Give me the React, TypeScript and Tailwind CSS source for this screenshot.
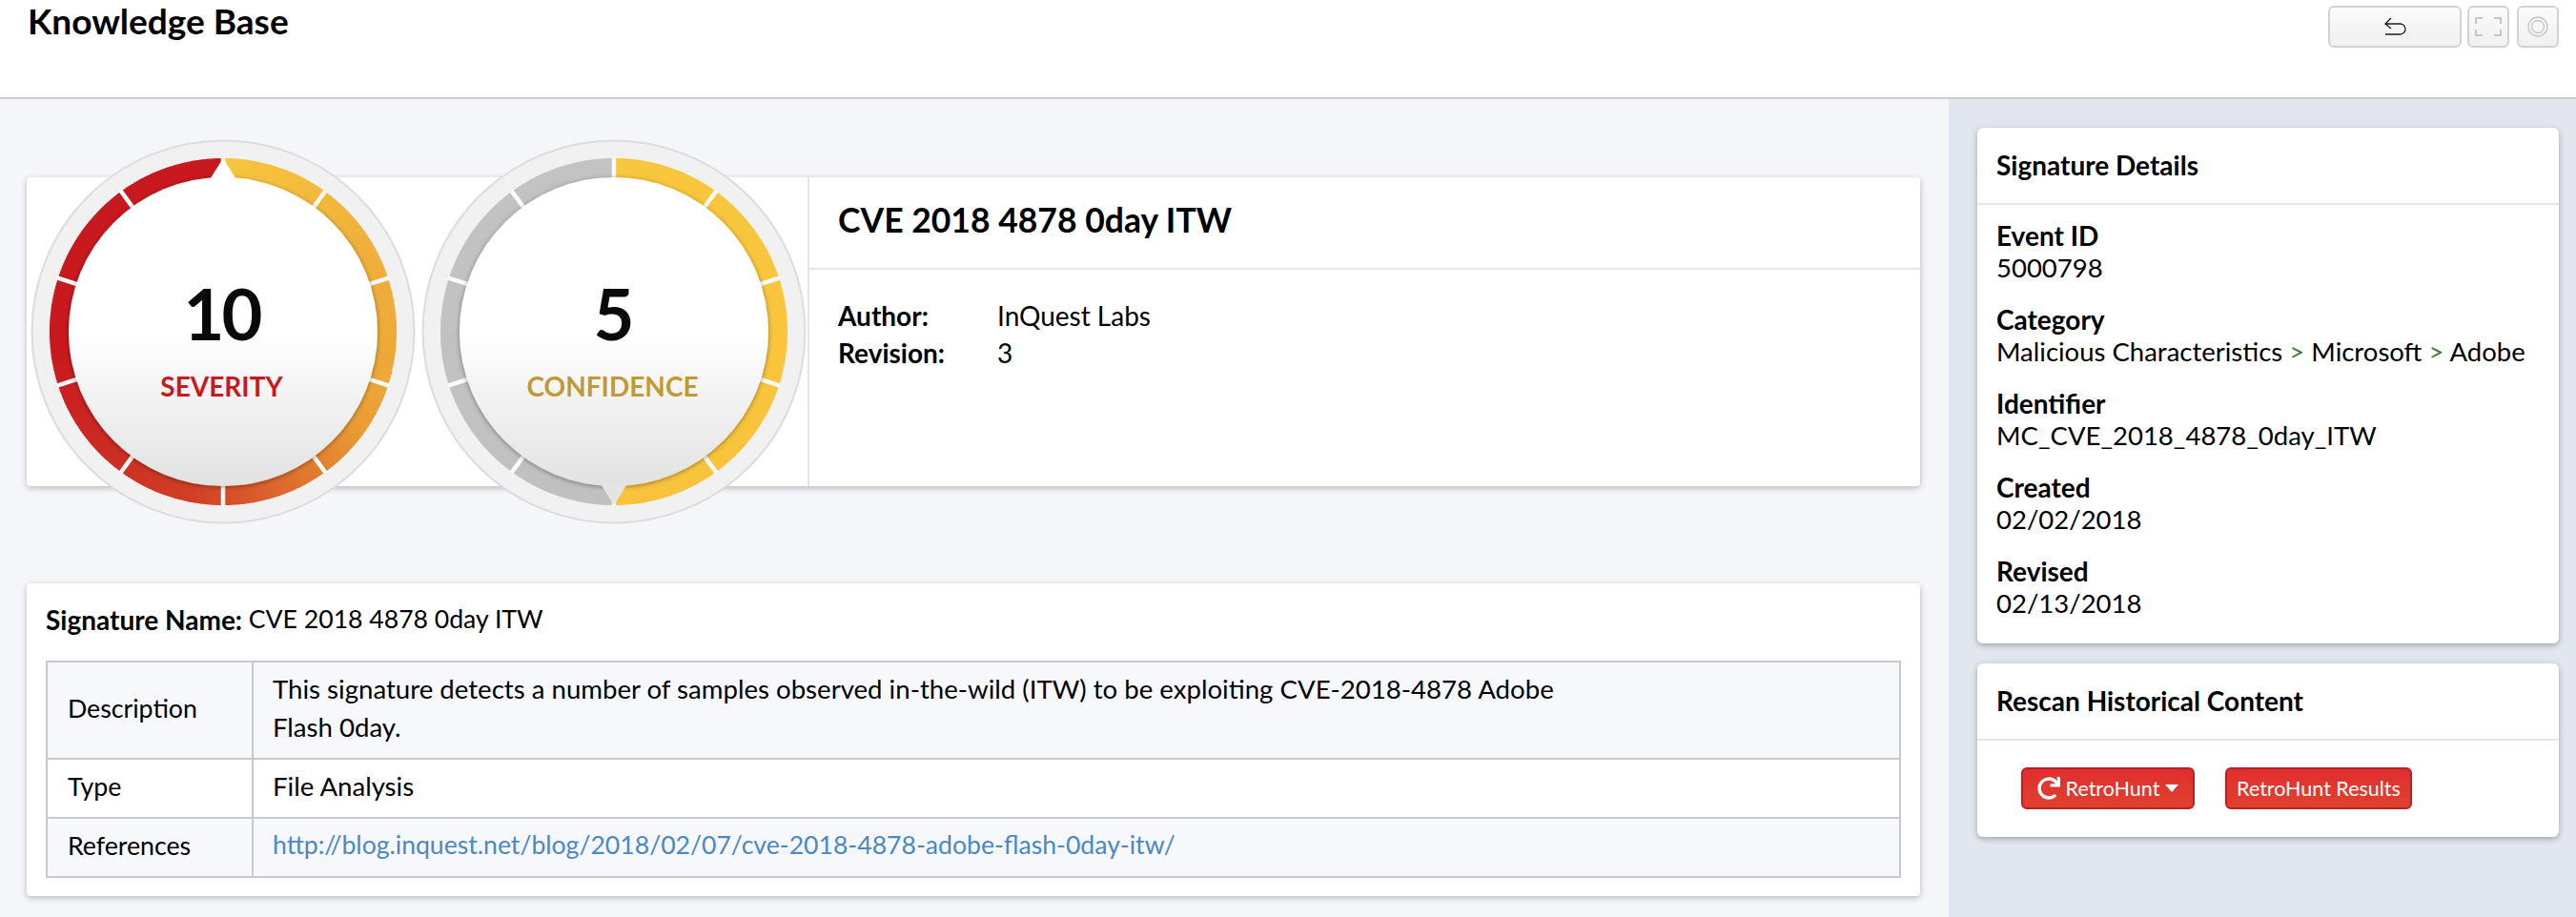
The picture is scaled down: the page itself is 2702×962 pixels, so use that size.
import React from "react";
import { FaRedo } from "react-icons/fa";

type Stop = [number, string];
const hex = (c: string) => [1, 3, 5].map((i) => parseInt(c.slice(i, i + 2), 16));
function colorAt(stops: Stop[], a: number) {
  for (let i = 0; i < stops.length - 1; i++) {
    const [a0, c0] = stops[i];
    const [a1, c1] = stops[i + 1];
    if (a >= a0 && a <= a1) {
      const t = (a - a0) / (a1 - a0 || 1);
      const x = hex(c0);
      const y = hex(c1);
      return `rgb(${x.map((v, k) => Math.round(v + (y[k] - v) * t)).join(",")})`;
    }
  }
  return stops[stops.length - 1][1];
}
const pt = (r: number, deg: number) => {
  const t = (deg * Math.PI) / 180;
  return `${(r * Math.sin(t)).toFixed(2)},${(-r * Math.cos(t)).toFixed(2)}`;
};

const sevStops: Stop[] = [
  [0, "#f8c63e"], [60, "#efb03a"], [105, "#eda838"], [125, "#e99c34"], [145, "#e27f30"],
  [172, "#d9562a"], [190, "#d04026"], [225, "#cc2c22"], [265, "#c8191e"], [360, "#c8191f"],
];
const confStops: Stop[] = [
  [0, "#f8c73d"], [180, "#f8c33c"], [180.01, "#c0c0c0"], [360, "#c3c3c3"],
];

function Gauge({ id, stops, value, label, labelClass, pointer }: {
  id: string; stops: Stop[]; value: string; label: string; labelClass: string; pointer: "top" | "bottom";
}) {
  const slices = Array.from({ length: 360 }, (_, i) => i);
  const ticks = Array.from({ length: 10 }, (_, i) => i * 36);
  return (
    <div className="relative w-[404px] h-[404px]">
      <svg className="absolute inset-0" width="404" height="404" viewBox="-202 -202 404 404">
        <defs>
          <linearGradient id={`${id}-disc`} x1="0" y1="0" x2="0" y2="1">
            <stop offset="0" stopColor="#ffffff" />
            <stop offset="0.5" stopColor="#ffffff" />
            <stop offset="1" stopColor="#e2e2e2" />
          </linearGradient>
          <filter id={`${id}-shadow`} x="-10%" y="-10%" width="120%" height="120%">
            <feDropShadow dx="0" dy="1" stdDeviation="2.5" floodColor="#000" floodOpacity="0.4" />
          </filter>
        </defs>
        <circle r="200.5" fill="#f1f1f1" stroke="#dcdcdc" strokeWidth="2" />
        {slices.map((a) => (
          <polygon
            key={a}
            fill={colorAt(stops, a + 0.5)}
            points={`${pt(182, a)} ${pt(182, a + (a === 179 || a === 359 ? 1 : 1.3))} ${pt(160, a + (a === 179 || a === 359 ? 1 : 1.3))} ${pt(160, a)}`}
          />
        ))}
        {ticks.map((a) => (
          <line key={a} x1={pt(158, a).split(",")[0]} y1={pt(158, a).split(",")[1]} x2={pt(183, a).split(",")[0]} y2={pt(183, a).split(",")[1]} stroke="#fbfbfb" strokeWidth="4.5" />
        ))}
        <circle r="162" fill={`url(#${id}-disc)`} filter={`url(#${id}-shadow)`} />
        {pointer === "top" ? (
          <polygon points="0,-182 -15,-158 15,-158" fill="#ffffff" />
        ) : (
          <polygon points="0,182 -15,158 15,158" fill="#e4e4e4" />
        )}
      </svg>
      <div className="absolute inset-0 flex flex-col items-center pt-[143px]">
        <div className="h-[80px] text-[74px] leading-[80px] font-bold tracking-[-3px] text-[#0a0a0a] -ml-[3px]">{value}</div>
        <div className={`mt-[21px] h-[30px] text-[28px] leading-[30px] font-bold -ml-[3px] ${labelClass}`}>{label}</div>
      </div>
    </div>
  );
}

function DetailItem({ label, children }: { label: string; children: React.ReactNode }) {
  return (
    <div className="h-[88px]">
      <div className="text-[28px] leading-[34px] font-bold text-black">{label}</div>
      <div className="text-[27.5px] leading-[34px] text-black">{children}</div>
    </div>
  );
}

export default function App() {
  return (
    <div className="w-full h-[962px] overflow-hidden bg-[#f5f6fa] font-['Lato',sans-serif] text-black flex flex-col">
      <header className="h-[104px] shrink-0 bg-white border-b-2 border-[#cdcdcd] flex justify-between items-start pl-[29px] pr-[18px]">
        <h1 className="text-[37px] leading-[44px] font-bold">Knowledge Base</h1>
        <div className="flex gap-[6px] pt-[6px]">
          <button className="w-[140px] h-[44px] rounded-[6px] border-2 border-[#d2d2d2] bg-gradient-to-b from-[#fbfbfb] to-[#f0f0f0] flex items-center justify-center">
            <svg width="23" height="20" viewBox="-1 -1 23 20" fill="none" stroke="#1c1c1c" strokeWidth="1.3">
              <path d="M6 0 L0 6 L6 11 M0 6 H15.5 A5.5 5.5 0 0 1 15.5 17 H0" />
            </svg>
          </button>
          <button className="w-[44px] h-[44px] rounded-[6px] border-2 border-[#d2d2d2] bg-gradient-to-b from-[#fbfbfb] to-[#f0f0f0] flex items-center justify-center">
            <svg width="28" height="20" viewBox="0 0 28 20" fill="none" stroke="#c6c6c6" strokeWidth="2">
              <path d="M8 1 H1 V7 M20 1 H27 V7 M1 13 V19 H8 M27 13 V19 H20" />
            </svg>
          </button>
          <button className="ml-[2px] w-[44px] h-[44px] rounded-[6px] border-2 border-[#d2d2d2] bg-gradient-to-b from-[#fbfbfb] to-[#f0f0f0] flex items-center justify-center">
            <svg width="24" height="24" viewBox="0 0 24 24" fill="none" stroke="#c4c4c4" strokeWidth="1.3">
              <circle cx="12" cy="12" r="10" />
              <circle cx="12" cy="12" r="6.5" />
            </svg>
          </button>
        </div>
      </header>

      <div className="flex-1 flex min-h-0">
        <main className="flex-1 pl-[28px] pr-[30px] pt-[82px]">
          <section className="relative h-[324px] bg-white rounded-[4px] shadow-[0_2px_6px_rgba(0,0,0,0.25)] flex">
            <div className="w-[821px] shrink-0 border-r-2 border-[#e6e6e6]" />
            <div className="flex-1">
              <div className="h-[97px] border-b-2 border-[#e6e6e6] flex items-center pl-[30px] pb-[6px]">
                <h2 className="text-[35.5px] leading-[44px] font-bold">CVE 2018 4878 0day ITW</h2>
              </div>
              <div className="pl-[30px] pt-[29px] text-[28px] leading-[39px]">
                <div className="flex"><span className="w-[167px] font-bold">Author:</span><span>InQuest Labs</span></div>
                <div className="flex"><span className="w-[167px] font-bold">Revision:</span><span>3</span></div>
              </div>
            </div>
            <div className="absolute left-[4px] top-[-40px] flex gap-[6px]">
              <Gauge id="sev" stops={sevStops} value="10" label="SEVERITY" labelClass="text-[#c8191f]" pointer="top" />
              <Gauge id="conf" stops={confStops} value="5" label="CONFIDENCE" labelClass="text-[#c09a32]" pointer="bottom" />
            </div>
          </section>

          <section className="mt-[102px] h-[328px] bg-white rounded-[4px] shadow-[0_2px_6px_rgba(0,0,0,0.25)] px-[20px]">
            <div className="h-[81px] flex items-center pb-[6px] text-[26.6px]">
              <span className="font-bold text-[28px]">Signature Name:</span>&nbsp;CVE 2018 4878 0day ITW
            </div>
            <table className="w-full border-collapse border-2 border-[#c9c9c9] text-[27.6px]">
              <tbody>
                <tr className="h-[102px] bg-[#f7f8fc]">
                  <td className="w-[216px] border-2 border-[#c9c9c9] pl-[21px] pb-[4px] text-[26.7px]">Description</td>
                  <td className="border-2 border-[#c9c9c9] pl-[20px] pb-[4px] leading-[40px]">
                    This signature detects a number of samples observed in-the-wild (ITW) to be exploiting CVE-2018-4878 Adobe<br />Flash 0day.
                  </td>
                </tr>
                <tr className="h-[62px] bg-white">
                  <td className="border-2 border-[#c9c9c9] pl-[21px] pb-[4px] text-[26.7px]">Type</td>
                  <td className="border-2 border-[#c9c9c9] pl-[20px] pb-[4px]">File Analysis</td>
                </tr>
                <tr className="h-[62px] bg-[#f7f8fc]">
                  <td className="border-2 border-[#c9c9c9] pl-[21px] pb-[4px] text-[26.7px]">References</td>
                  <td className="border-2 border-[#c9c9c9] pl-[20px] pb-[4px] text-[26.6px] text-[#4a88c7]">http://blog.inquest.net/blog/2018/02/07/cve-2018-4878-adobe-flash-0day-itw/</td>
                </tr>
              </tbody>
            </table>
          </section>
        </main>

        <aside className="w-[658px] shrink-0 bg-[#e2e6ee] pt-[30px] pl-[30px] pr-[18px]">
          <section className="h-[541px] bg-white rounded-[6px] shadow-[0_2px_6px_rgba(0,0,0,0.3)]">
            <div className="h-[81px] border-b-2 border-[#e6e6e6] flex items-center pl-[20px] pb-[2px] text-[28px] font-bold">Signature Details</div>
            <div className="pl-[20px] pt-[15px]">
              <DetailItem label="Event ID">5000798</DetailItem>
              <DetailItem label="Category">
                Malicious Characteristics <span className="text-[#3c7a3c]">&gt;</span> Microsoft <span className="text-[#3c7a3c]">&gt;</span> Adobe
              </DetailItem>
              <DetailItem label="Identifier">MC_CVE_2018_4878_0day_ITW</DetailItem>
              <DetailItem label="Created">02/02/2018</DetailItem>
              <DetailItem label="Revised">02/13/2018</DetailItem>
            </div>
          </section>
          <section className="mt-[21px] h-[182px] bg-white rounded-[6px] shadow-[0_2px_6px_rgba(0,0,0,0.3)]">
            <div className="h-[81px] border-b-2 border-[#e6e6e6] flex items-center pl-[20px] pb-[2px] text-[28px] font-bold">Rescan Historical Content</div>
            <div className="pl-[46px] pt-[28px] flex gap-[32px]">
              <button className="w-[182px] h-[44px] rounded-[6px] border-2 border-[#b82026] bg-gradient-to-b from-[#e02e30] to-[#e0402f] text-white text-[21.5px] flex items-center justify-center gap-[6px]">
                <FaRedo className="text-[24px]" />
                <span>RetroHunt</span>
                <span className="w-0 h-0 border-x-[7px] border-x-transparent border-t-[8px] border-t-white" />
              </button>
              <button className="w-[196px] h-[44px] rounded-[6px] border-2 border-[#b82026] bg-gradient-to-b from-[#e02e30] to-[#e0402f] text-white text-[21.5px] flex items-center justify-center">
                RetroHunt Results
              </button>
            </div>
          </section>
        </aside>
      </div>
    </div>
  );
}
